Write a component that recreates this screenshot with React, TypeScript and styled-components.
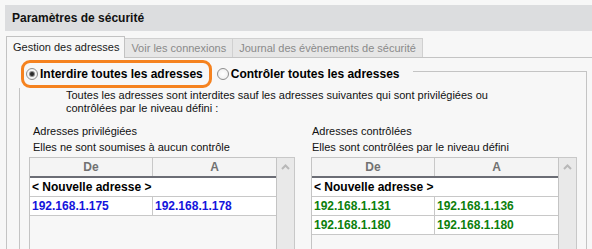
import React from "react";
import styled, { createGlobalStyle } from "styled-components";

const GlobalStyle = createGlobalStyle`
  html, body {
    margin: 0;
    padding: 0;
    background: #f7f7f7;
    overflow: hidden;
  }
  body {
    font-family: "Liberation Sans", Arial, sans-serif;
    color: #111;
  }
  * { box-sizing: border-box; }
`;

const Page = styled.div`
  width: 592px;
  height: 249px;
  padding-top: 5px;
  overflow: hidden;
`;

const TitleBar = styled.div`
  margin-left: 5px;
  height: 26px;
  line-height: 26px;
  padding-left: 7px;
  background: #dcdddf;
  font-size: 12px;
  font-weight: bold;
  color: #111;
`;

const TabRow = styled.div`
  display: flex;
  align-items: flex-end;
  margin: 5px 0 0 6px;
  position: relative;
  z-index: 1;
`;

const Tab = styled.div<{ $active?: boolean }>`
  height: ${(p) => (p.$active ? "22px" : "19px")};
  margin-bottom: ${(p) => (p.$active ? "-1px" : "0")};
  padding: ${(p) => (p.$active ? "4px 5px 0 6px" : "3px 6px 0 6px")};
  border: 1px solid ${(p) => (p.$active ? "#c2c2c2" : "#d0d0d0")};
  border-bottom: none;
  border-left-width: ${(p) => (p.$active ? "1px" : "0")};
  background: ${(p) => (p.$active ? "#f7f7f7" : "#e6e6e6")};
  color: ${(p) => (p.$active ? "#1a1a1a" : "#8a8a8a")};
  font-size: 11px;
  line-height: 13px;
  white-space: nowrap;
`;

const Panel = styled.div`
  margin-left: 6px;
  border-top: 1px solid #c4c4c4;
  border-left: 1px solid #c4c4c4;
  height: 200px;
`;

const GroupBox = styled.div`
  display: flex;
  flex-direction: column;
  margin: 13px 5px 0 12px;
  border: 1px solid #c4c4c4;
  border-bottom: none;
  height: 190px;
`;

const Legend = styled.div`
  align-self: flex-start;
  display: flex;
  align-items: center;
  margin: -12px 0 0 -1px;
  padding-right: 14px;
  background: #f7f7f7;
  height: 28px;
`;

const Highlight = styled.div`
  display: flex;
  align-items: center;
  height: 28px;
  margin-left: 2px;
  padding: 0 6px 0 2px;
  border: 3px solid #f5821f;
  border-radius: 9px;
`;

const Option = styled.label<{ $spaced?: boolean }>`
  display: flex;
  align-items: center;
  gap: 2px;
  margin-left: ${(p) => (p.$spaced ? "5px" : "0")};
  font-size: 12px;
  font-weight: bold;
  color: #000;
  white-space: nowrap;
`;

const RadioDot = styled.span<{ $checked?: boolean }>`
  width: 12px;
  height: 12px;
  border-radius: 50%;
  border: 1px solid #8e8e8e;
  background: radial-gradient(circle at 50% 50%, #ffffff 0%, #f1f1f1 70%, #dcdcdc 100%);
  display: flex;
  align-items: center;
  justify-content: center;

  &::after {
    content: "";
    display: ${(p) => (p.$checked ? "block" : "none")};
    width: 4px;
    height: 4px;
    border-radius: 50%;
    background: #2a2a2a;
    box-shadow: 0 0 0 1px #8a8a8a;
  }
`;

const Description = styled.div`
  margin: 1px 0 0 46px;
  font-size: 11px;
  line-height: 13px;
  white-space: nowrap;
`;

const Lists = styled.div`
  display: flex;
  gap: 16px;
  margin-top: 8px;
  padding-left: 9px;
`;

const ListBlock = styled.div`
  width: 266px;
  display: flex;
  flex-direction: column;
`;

const Label = styled.div<{ $indent: number }>`
  padding-left: ${(p) => p.$indent}px;
  font-size: 11px;
  line-height: 16px;
  white-space: nowrap;
`;

const Table = styled.div`
  display: flex;
  margin-top: 2px;
  height: 100px;
`;

const Grid = styled.div`
  width: 248px;
  border: 1px solid #c4c4c4;
  border-bottom: none;
  background: #f7f7f7;
`;

const Row = styled.div<{ $header?: boolean }>`
  display: grid;
  grid-template-columns: 123px 1fr;
  height: ${(p) => (p.$header ? "20px" : "19px")};
  border-bottom: ${(p) => (p.$header ? "2px solid #6b6d75" : "1px solid #c8c8c8")};
  background: ${(p) => (p.$header ? "#f4f4f4" : "#ffffff")};
`;

const Cell = styled.div<{ $header?: boolean; $span?: boolean; $color?: string }>`
  grid-column: ${(p) => (p.$span ? "1 / -1" : "auto")};
  border-right: ${(p) => (p.$span ? "none" : "1px solid #c8c8c8")};
  &:last-child { border-right: none; }
  padding-left: ${(p) => (p.$header ? "0" : "2px")};
  text-align: ${(p) => (p.$header ? "center" : "left")};
  font-size: 12px;
  font-weight: bold;
  line-height: 18px;
  color: ${(p) => (p.$header ? "#717171" : p.$color || "#000")};
  white-space: nowrap;
`;

const Scrollbar = styled.div`
  width: 18px;
  border-top: 1px solid #c8c8c8;
  border-right: 1px solid #c8c8c8;
  background: #e9e9e9;
  display: flex;
  justify-content: center;
  padding-top: 6px;
`;

type Range = { from: string; to: string };

const privileged: Range[] = [{ from: "192.168.1.175", to: "192.168.1.178" }];
const controlled: Range[] = [
  { from: "192.168.1.131", to: "192.168.1.136" },
  { from: "192.168.1.180", to: "192.168.1.180" },
];

function AddressTable({ rows, color }: { rows: Range[]; color: string }) {
  return (
    <Table>
      <Grid>
        <Row $header>
          <Cell $header>De</Cell>
          <Cell $header>A</Cell>
        </Row>
        <Row>
          <Cell $span>&lt; Nouvelle adresse &gt;</Cell>
        </Row>
        {rows.map((r, i) => (
          <Row key={i}>
            <Cell $color={color}>{r.from}</Cell>
            <Cell $color={color}>{r.to}</Cell>
          </Row>
        ))}
      </Grid>
      <Scrollbar>
        <svg width="9" height="6" viewBox="0 0 9 6">
          <polyline points="1,5 4.5,1.5 8,5" fill="none" stroke="#b8b8b8" strokeWidth="2" />
        </svg>
      </Scrollbar>
    </Table>
  );
}

export default function App() {
  return (
    <Page>
      <GlobalStyle />
      <TitleBar>Paramètres de sécurité</TitleBar>
      <TabRow>
        <Tab $active>Gestion des adresses</Tab>
        <Tab>Voir les connexions</Tab>
        <Tab>Journal des évènements de sécurité</Tab>
      </TabRow>
      <Panel>
        <GroupBox>
          <Legend>
            <Highlight>
              <Option>
                <RadioDot $checked />
                Interdire toutes les adresses
              </Option>
            </Highlight>
            <Option $spaced>
              <RadioDot />
              Contrôler toutes les adresses
            </Option>
          </Legend>
          <Description>
            Toutes les adresses sont interdites sauf les adresses suivantes qui sont privilégiées ou
            <br />
            contrôlées par le niveau défini :
          </Description>
          <Lists>
            <ListBlock>
              <Label $indent={4}>Adresses privilégiées</Label>
              <Label $indent={4}>Elles ne sont soumises à aucun contrôle</Label>
              <AddressTable rows={privileged} color="#1414dc" />
            </ListBlock>
            <ListBlock>
              <Label $indent={1}>Adresses contrôlées</Label>
              <Label $indent={1}>Elles sont contrôlées par le niveau défini</Label>
              <AddressTable rows={controlled} color="#0c7f0c" />
            </ListBlock>
          </Lists>
        </GroupBox>
      </Panel>
    </Page>
  );
}
